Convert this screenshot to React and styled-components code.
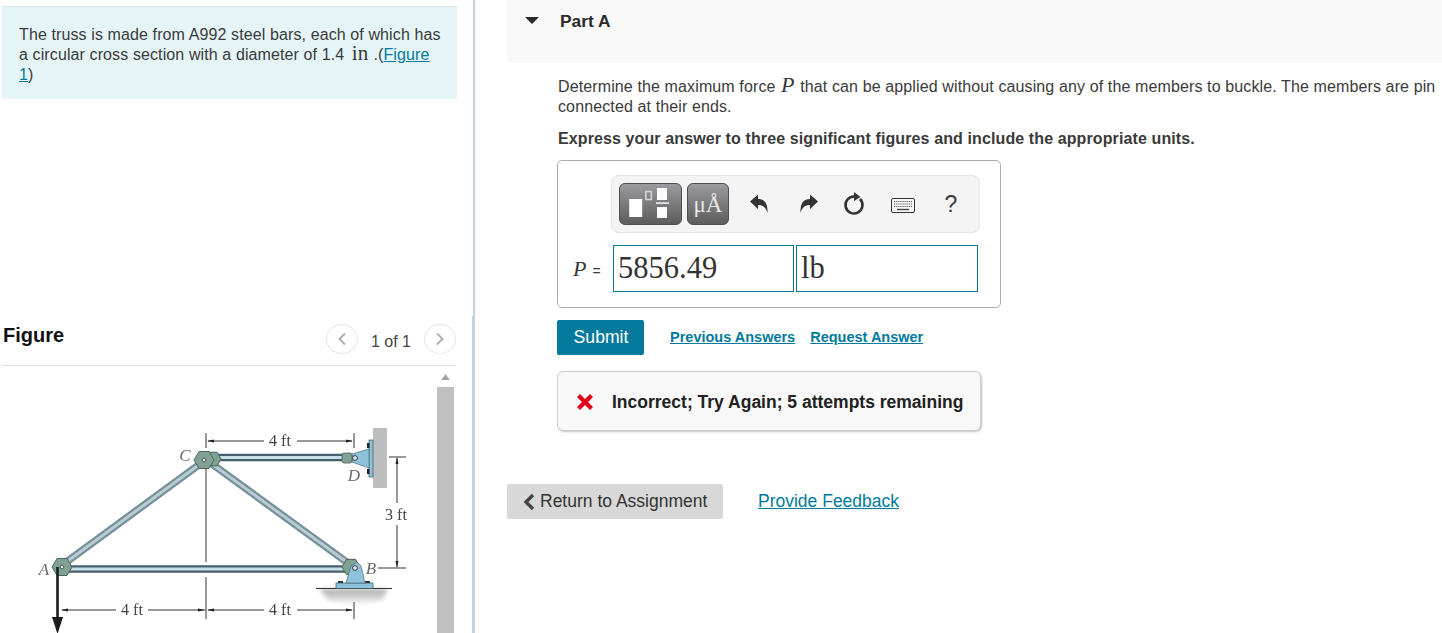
import React from "react";
import styled, { createGlobalStyle } from "styled-components";

const GlobalStyle = createGlobalStyle`
  html, body {
    margin: 0;
    padding: 0;
    height: 633px;
    overflow: hidden;
    background: #fff;
    font-family: "Liberation Sans", Arial, sans-serif;
    color: #3a3a3a;
  }
`;

const Page = styled.div`
  display: flex;
  width: 1442px;
  height: 633px;
  overflow: hidden;
`;

const LeftColumn = styled.div`
  width: 473px;
  flex: none;
  border-right: 2px solid #c3d3e3;
  overflow: hidden;
`;

const IntroBox = styled.div`
  margin: 6px 16px 0 2px;
  height: 93px;
  padding: 18px 14px 0 17px;
  box-sizing: border-box;
  border-top: 1px solid #dce3e6;
  background: #e5f5f7;
  font-size: 16px;
  line-height: 20px;
  letter-spacing: 0.11px;
`;

const MathWord = styled.span`
  font-family: "Liberation Serif", serif;
  font-size: ${(props) => props.size || "18px"};
  font-style: ${(props) => (props.italic ? "italic" : "normal")};
  line-height: 0;
  margin: 0 ${(props) => props.after || props.gap || "2px"} 0 ${(props) => props.gap || "2px"};
`;

const TextLink = styled.a`
  color: #007a9c;
  text-decoration: underline;
  font-size: ${(props) => props.size || "inherit"};
  font-weight: ${(props) => (props.bold ? 700 : 400)};
`;

const FigureSection = styled.div`
  margin-top: 217px;
  padding-top: 7px;
  height: 317px;
  box-sizing: border-box;
  border-right: 1px solid #c3d3e3;
`;

const FigureHeader = styled.div`
  display: flex;
  align-items: center;
  justify-content: space-between;
  margin: 0 16px 0 2px;
  height: 42px;
  border-bottom: 1px solid #dcdfe3;
`;

const FigureTitle = styled.div`
  font-size: 20px;
  font-weight: 700;
  color: #111;
  margin: 0 0 18px 1px;
`;

const Pager = styled.div`
  display: flex;
  align-items: center;
  margin-bottom: 10px;
`;

const PagerButton = styled.div`
  width: 30px;
  height: 28px;
  display: flex;
  align-items: center;
  justify-content: center;
  border: 1px solid #e6e6e6;
  border-radius: 50%;
  background: #fff;
`;

const PagerText = styled.span`
  font-size: 16px;
  margin: 6px 13px 0;
  color: #444;
`;

const FigureBody = styled.div`
  display: flex;
  margin-left: 2px;
  height: 267px;
`;

const FigureArt = styled.svg`
  width: 435px;
  height: 267px;
  flex: none;
  filter: blur(0.35px);
`;

const ScrollTrack = styled.div`
  width: 17px;
  flex: none;
  display: flex;
  flex-direction: column;
  background: #f3f3f3;
`;

const ScrollArrow = styled.div`
  height: 21px;
  display: flex;
  align-items: center;
  justify-content: center;
  background: #fff;
`;

const ScrollThumb = styled.div`
  flex: 1;
  background: #c1c1c1;
`;

const RightColumn = styled.div`
  flex: 1;
  min-width: 0;
  padding-left: 32px;
`;

const PartHeader = styled.div`
  display: flex;
  align-items: flex-start;
  height: 63px;
  background: #f9f9f9;
  padding: 11px 0 0 18px;
  box-sizing: border-box;
  font-size: 17.4px;
  font-weight: 700;
  color: #2a2a2a;
`;

const Caret = styled.div`
  width: 0;
  height: 0;
  margin: 6px 21px 0 0;
  border-left: 7px solid transparent;
  border-right: 7px solid transparent;
  border-top: 7px solid #2a2a2a;
`;

const PartBody = styled.div`
  padding-left: 50px;
`;

const Prompt = styled.p`
  margin: 14px 0 0;
  padding-left: 1px;
  font-size: 16px;
  line-height: 20px;
  letter-spacing: 0.12px;
  white-space: nowrap;
`;

const Instruction = styled.p`
  margin: 12px 0 0;
  padding-left: 1px;
  font-size: 16px;
  line-height: 20px;
  font-weight: 700;
  letter-spacing: 0.11px;
`;

const AnswerBox = styled.div`
  width: 444px;
  height: 148px;
  box-sizing: border-box;
  margin-top: 11px;
  padding: 14px 20px 0 15px;
  border: 1px solid #acacac;
  border-radius: 5px;
`;

const Toolbar = styled.div`
  display: flex;
  align-items: center;
  width: 369px;
  height: 58px;
  box-sizing: border-box;
  margin-left: 38px;
  padding-left: 7px;
  background: #f4f4f4;
  border: 1px solid #e4e4e4;
  border-radius: 8px;
`;

const TemplateButton = styled.div`
  display: flex;
  align-items: center;
  justify-content: center;
  width: ${(props) => props.width};
  height: 42px;
  box-sizing: border-box;
  margin-right: 5px;
  border: 1px solid #4d4d4d;
  border-radius: 6px;
  background: linear-gradient(#9b9aa0, #5c5c5c);
`;

const SymbolText = styled.span`
  font-family: "Liberation Serif", serif;
  font-size: 23px;
  padding-top: 2px;
  color: #e8e8e8;
`;

const ToolIcon = styled.div`
  width: ${(props) => props.width || "48px"};
  display: flex;
  align-items: center;
  justify-content: center;
  margin-top: ${(props) => props.drop || "0"};
  font-size: 23px;
  color: #3a3a3a;
`;

const EquationRow = styled.div`
  display: flex;
  align-items: center;
  margin-top: 12px;
`;

const EquationLabel = styled.div`
  display: flex;
  align-items: baseline;
  width: 40px;
  flex: none;
  font-size: 14px;
  white-space: nowrap;
`;

const LabelSymbol = styled.span`
  font-family: "Liberation Serif", serif;
  font-style: italic;
  font-size: 22px;
  margin-right: 6px;
`;

const MathField = styled.div`
  width: ${(props) => props.width};
  height: 47px;
  box-sizing: border-box;
  margin-right: 2px;
  padding-left: 4px;
  border: 1px solid #047a9c;
  font-family: "Liberation Serif", serif;
  font-size: 30.5px;
  line-height: 45px;
  color: #333;
`;

const ActionRow = styled.div`
  display: flex;
  align-items: center;
  margin-top: 12px;
`;

const SubmitButton = styled.div`
  width: 87px;
  height: 35px;
  box-sizing: border-box;
  display: flex;
  align-items: center;
  justify-content: center;
  margin-right: 26px;
  padding-left: 1px;
  border-radius: 2px;
  background: #047a9c;
  color: #fff;
  font-size: 17.6px;
`;

const ActionLink = styled(TextLink)`
  margin: 0 15px 2px 0;
`;

const FeedbackBox = styled.div`
  display: flex;
  align-items: center;
  width: 424px;
  height: 60px;
  box-sizing: border-box;
  margin-top: 16px;
  padding: 2px 0 0 18px;
  background: #f8f8f8;
  border: 1px solid #cdcdcd;
  border-radius: 6px;
  box-shadow: 1px 1px 2px #c4c4c4;
  font-size: 17.5px;
  font-weight: 700;
  color: #222;
`;

const CrossIcon = styled.svg`
  width: 18px;
  height: 18px;
  flex: none;
  margin-right: 18px;
`;

const FooterRow = styled.div`
  display: flex;
  align-items: center;
  margin-top: 53px;
`;

const ReturnButton = styled.div`
  display: flex;
  align-items: center;
  width: 216px;
  height: 35px;
  box-sizing: border-box;
  margin-right: 35px;
  padding-left: 16px;
  background: #d8d8d8;
  border-radius: 2px;
  font-size: 17.5px;
  color: #333;
`;

const ReturnChevron = styled.svg`
  width: 12px;
  height: 18px;
  margin-right: 5px;
`;

const Chevron = ({ left }) => (
  <svg width="10" height="14" viewBox="0 0 10 14">
    <path
      d={left ? "M8 1.5 2.5 7 8 12.5" : "M2 1.5 7.5 7 2 12.5"}
      fill="none"
      stroke="#b0b0b0"
      strokeWidth="2"
    />
  </svg>
);

const Rod = ({ x1, y1, x2, y2, outer, inner }) => (
  <g>
    <line x1={x1} y1={y1} x2={x2} y2={y2} stroke={outer} strokeWidth="7.5" />
    <line x1={x1} y1={y1} x2={x2} y2={y2} stroke={inner} strokeWidth="3" />
  </g>
);

const Joint = ({ cx, cy, r = 9, pin = true }) => (
  <g>
    <polygon
      points={`${cx - r},${cy} ${cx - r / 2},${cy - r * 0.85} ${cx + r / 2},${cy - r * 0.85} ${cx + r},${cy} ${cx + r / 2},${cy + r * 0.85} ${cx - r / 2},${cy + r * 0.85}`}
      fill="#7fa294"
      stroke="#4d635b"
      strokeWidth="1"
    />
    {pin && <circle cx={cx} cy={cy} r="1.8" fill="#e3ebe8" stroke="#36423e" strokeWidth="0.8" />}
  </g>
);

const DimLine = (props) => <line stroke="#333" strokeWidth="1" {...props} />;

const Head = ({ points }) => <polygon points={points} fill="#222" />;

const Label = styled.text`
  font-family: "Liberation Serif", serif;
  font-size: ${(props) => props.size || "16px"};
  font-style: ${(props) => (props.italic ? "italic" : "normal")};
  fill: ${(props) => props.color || "#444"};
`;

const TrussFigure = () => (
  <FigureArt viewBox="2 366 435 267">
    <defs>
      <linearGradient id="groundShade" x1="0" y1="0" x2="0" y2="1">
        <stop offset="0" stopColor="#a8a8a8" />
        <stop offset="1" stopColor="#f4f4f4" />
      </linearGradient>
      <filter id="groundBlur" x="-10%" y="-30%" width="120%" height="160%">
        <feGaussianBlur stdDeviation="2" />
      </filter>
    </defs>

    <path
      d="M320 589H388L382 601Q354 606 328 601Z"
      fill="url(#groundShade)"
      filter="url(#groundBlur)"
    />
    <rect x="373" y="428" width="14" height="60" fill="#bcbec0" />

    <DimLine x1="206" y1="433" x2="206" y2="448" />
    <DimLine x1="206" y1="468" x2="206" y2="562" />
    <DimLine x1="206" y1="577" x2="206" y2="619" />
    <DimLine x1="354" y1="433" x2="354" y2="448" />
    <DimLine x1="354" y1="602" x2="354" y2="619" />
    <DimLine x1="208" y1="441" x2="264" y2="441" />
    <DimLine x1="297" y1="441" x2="352" y2="441" />
    <Head points="207,441 214,439.5 214,442.5" />
    <Head points="353,441 346,439.5 346,442.5" />
    <Label x="280" y="446" textAnchor="middle">4 ft</Label>

    <DimLine x1="62" y1="610" x2="116" y2="610" />
    <DimLine x1="148" y1="610" x2="205" y2="610" />
    <DimLine x1="208" y1="610" x2="264" y2="610" />
    <DimLine x1="297" y1="610" x2="352" y2="610" />
    <Head points="61,610 68,608.5 68,611.5" />
    <Head points="205,610 198,608.5 198,611.5" />
    <Head points="207,610 214,608.5 214,611.5" />
    <Head points="353,610 346,608.5 346,611.5" />
    <Label x="132" y="615" textAnchor="middle">4 ft</Label>
    <Label x="280" y="615" textAnchor="middle">4 ft</Label>

    <DimLine x1="389" y1="457" x2="406" y2="457" />
    <DimLine x1="378" y1="568" x2="406" y2="568" />
    <DimLine x1="397" y1="458" x2="397" y2="503" />
    <DimLine x1="397" y1="525" x2="397" y2="567" />
    <Head points="397,457.5 395.5,464 398.5,464" />
    <Head points="397,567.5 395.5,561 398.5,561" />
    <Label x="396" y="520" textAnchor="middle">3 ft</Label>

    <Rod x1="65" y1="563" x2="200" y2="464" outer="#76909a" inner="#b9ccd2" />
    <Rod x1="212" y1="464" x2="348" y2="563" outer="#76909a" inner="#b9ccd2" />
    <Rod x1="215" y1="457.5" x2="345" y2="457.5" outer="#46606b" inner="#c9e0ea" />
    <Rod x1="68" y1="569" x2="345" y2="569" outer="#46606b" inner="#c9e0ea" />

    <rect x="369" y="440" width="4" height="37" fill="#8ec1da" stroke="#36505c" strokeWidth="0.7" />
    <rect x="367" y="443" width="2.5" height="5" fill="#222" />
    <rect x="367" y="469" width="2.5" height="5" fill="#222" />
    <polygon points="352,454 369,449 369,468 352,462" fill="#8ec1da" stroke="#4c6a78" strokeWidth="0.7" />
    <rect x="342" y="453" width="10" height="10" rx="2" fill="#7fa294" stroke="#4d635b" strokeWidth="0.8" />
    <circle cx="355" cy="458" r="2.4" fill="#dfe8ec" stroke="#2e3a40" strokeWidth="1" />

    <Joint cx={213} cy={459} r={8} pin={false} />
    <Joint cx={204} cy={460} r={10} />
    <Joint cx={62} cy={567} r={10} />

    <line x1="316" y1="588.5" x2="392" y2="588.5" stroke="#333" strokeWidth="1" />
    <rect x="336" y="583" width="37" height="5.5" fill="#8ec1da" stroke="#36505c" strokeWidth="0.7" />
    <rect x="338" y="581" width="5" height="2" fill="#333" />
    <rect x="365" y="581" width="5" height="2" fill="#333" />
    <Joint cx={351} cy={567} r={9} pin={false} />
    <polygon points="346,583 351,566 357,562 361,566 365,583" fill="#8ec1da" stroke="#4c6a78" strokeWidth="0.7" />
    <circle cx="355" cy="568" r="2.4" fill="#dfe8ec" stroke="#2e3a40" strokeWidth="1" />

    <line x1="57.5" y1="567" x2="57.5" y2="620" stroke="#1c1c1c" strokeWidth="2.6" />
    <polygon points="52,617 63,617 57.5,634" fill="#1c1c1c" />

    <Label x="44" y="575" textAnchor="middle" size="17px" italic="true" color="#6a6a6a">A</Label>
    <Label x="185" y="461" textAnchor="middle" size="17px" italic="true" color="#6a6a6a">C</Label>
    <Label x="354" y="481" textAnchor="middle" size="17px" italic="true" color="#6a6a6a">D</Label>
    <Label x="371" y="574" textAnchor="middle" size="17px" italic="true" color="#6a6a6a">B</Label>
  </FigureArt>
);

const TemplateIcon = () => (
  <svg width="46" height="36" viewBox="0 0 46 36">
    <rect x="1.2" y="13" width="13" height="18" fill="#fff" />
    <rect x="17.8" y="5.5" width="5.5" height="8" fill="none" stroke="#d4d4d4" strokeWidth="1.6" />
    <rect x="29" y="2" width="10" height="12" fill="#fff" />
    <rect x="28" y="16.4" width="13" height="1.4" fill="#fff" />
    <rect x="29" y="21" width="10" height="11" fill="#fff" />
  </svg>
);

const UndoIcon = ({ flip }) => (
  <svg width="20" height="22" viewBox="0 0 20 22" style={flip ? { transform: "scaleX(-1)" } : undefined}>
    <path
      d="M1 8.5 9 1.5V6C15 6 19 9.5 18.5 20 17 14.5 14 12 9 12V16Z"
      fill="#333"
    />
  </svg>
);

const ResetIcon = () => (
  <svg width="24" height="24" viewBox="0 0 24 24">
    <path d="M18 7A8.5 8.5 0 1 1 12 4.5" fill="none" stroke="#333" strokeWidth="2.6" />
    <path d="M12 0 18.5 5 12 9Z" fill="#333" />
  </svg>
);

const KeyboardIcon = () => (
  <svg width="24" height="15" viewBox="0 0 24 15">
    <rect x="0.5" y="0.5" width="23" height="14" rx="1.5" fill="#f7f7f7" stroke="#333" />
    <path
      d="M3 3.5H21M3 6H21M3 8.5H21"
      stroke="#555"
      strokeWidth="1.2"
      strokeDasharray="1.2 0.9"
    />
    <path d="M6 11.5H18" stroke="#444" strokeWidth="1.4" />
  </svg>
);

const App = () => (
  <Page>
    <GlobalStyle />
    <LeftColumn>
      <IntroBox>
        The truss is made from A992 steel bars, each of which has a circular cross section
        with a diameter of 1.4 <MathWord size="21px" gap="3px" after="5px">in</MathWord>.(<TextLink href="#">Figure 1</TextLink>)
      </IntroBox>
      <FigureSection>
        <FigureHeader>
          <FigureTitle>Figure</FigureTitle>
          <Pager>
            <PagerButton>
              <Chevron left />
            </PagerButton>
            <PagerText>1 of 1</PagerText>
            <PagerButton>
              <Chevron />
            </PagerButton>
          </Pager>
        </FigureHeader>
        <FigureBody>
          <TrussFigure />
          <ScrollTrack>
            <ScrollArrow>
              <svg width="9" height="6" viewBox="0 0 10 7">
                <path d="M5 0 10 7H0Z" fill="#a3a3a3" />
              </svg>
            </ScrollArrow>
            <ScrollThumb />
          </ScrollTrack>
        </FigureBody>
      </FigureSection>
    </LeftColumn>

    <RightColumn>
      <PartHeader>
        <Caret />
        Part A
      </PartHeader>
      <PartBody>
        <Prompt>
          Determine the maximum force <MathWord size="22px" italic="true" gap="1px">P</MathWord> that can be
          applied without causing any of the members to buckle. The members are pin
          <br />
          connected at their ends.
        </Prompt>
        <Instruction>
          Express your answer to three significant figures and include the appropriate units.
        </Instruction>
        <AnswerBox>
          <Toolbar>
            <TemplateButton width="63px">
              <TemplateIcon />
            </TemplateButton>
            <TemplateButton width="42px">
              <SymbolText>μÅ</SymbolText>
            </TemplateButton>
            <ToolIcon width="50px">
              <UndoIcon />
            </ToolIcon>
            <ToolIcon width="50px">
              <UndoIcon flip />
            </ToolIcon>
            <ToolIcon width="40px">
              <ResetIcon />
            </ToolIcon>
            <ToolIcon width="58px" drop="3px">
              <KeyboardIcon />
            </ToolIcon>
            <ToolIcon width="38px">?</ToolIcon>
          </Toolbar>
          <EquationRow>
            <EquationLabel>
              <LabelSymbol>P</LabelSymbol>=
            </EquationLabel>
            <MathField width="181px">5856.49</MathField>
            <MathField width="182px">lb</MathField>
          </EquationRow>
        </AnswerBox>
        <ActionRow>
          <SubmitButton>Submit</SubmitButton>
          <ActionLink href="#" bold="true" size="14.5px">Previous Answers</ActionLink>
          <ActionLink href="#" bold="true" size="14.5px">Request Answer</ActionLink>
        </ActionRow>
        <FeedbackBox>
          <CrossIcon viewBox="0 0 18 18">
            <path d="M4 1 9 6 14 1 17 4 12 9 17 14 14 17 9 12 4 17 1 14 6 9 1 4Z" fill="#e2001a" />
          </CrossIcon>
          Incorrect; Try Again; 5 attempts remaining
        </FeedbackBox>
      </PartBody>
      <FooterRow>
        <ReturnButton>
          <ReturnChevron viewBox="0 0 12 18">
            <path d="M10 2 3 9l7 7" fill="none" stroke="#444" strokeWidth="3.4" />
          </ReturnChevron>
          Return to Assignment
        </ReturnButton>
        <TextLink href="#" size="17.5px">Provide Feedback</TextLink>
      </FooterRow>
    </RightColumn>
  </Page>
);

export default App;
